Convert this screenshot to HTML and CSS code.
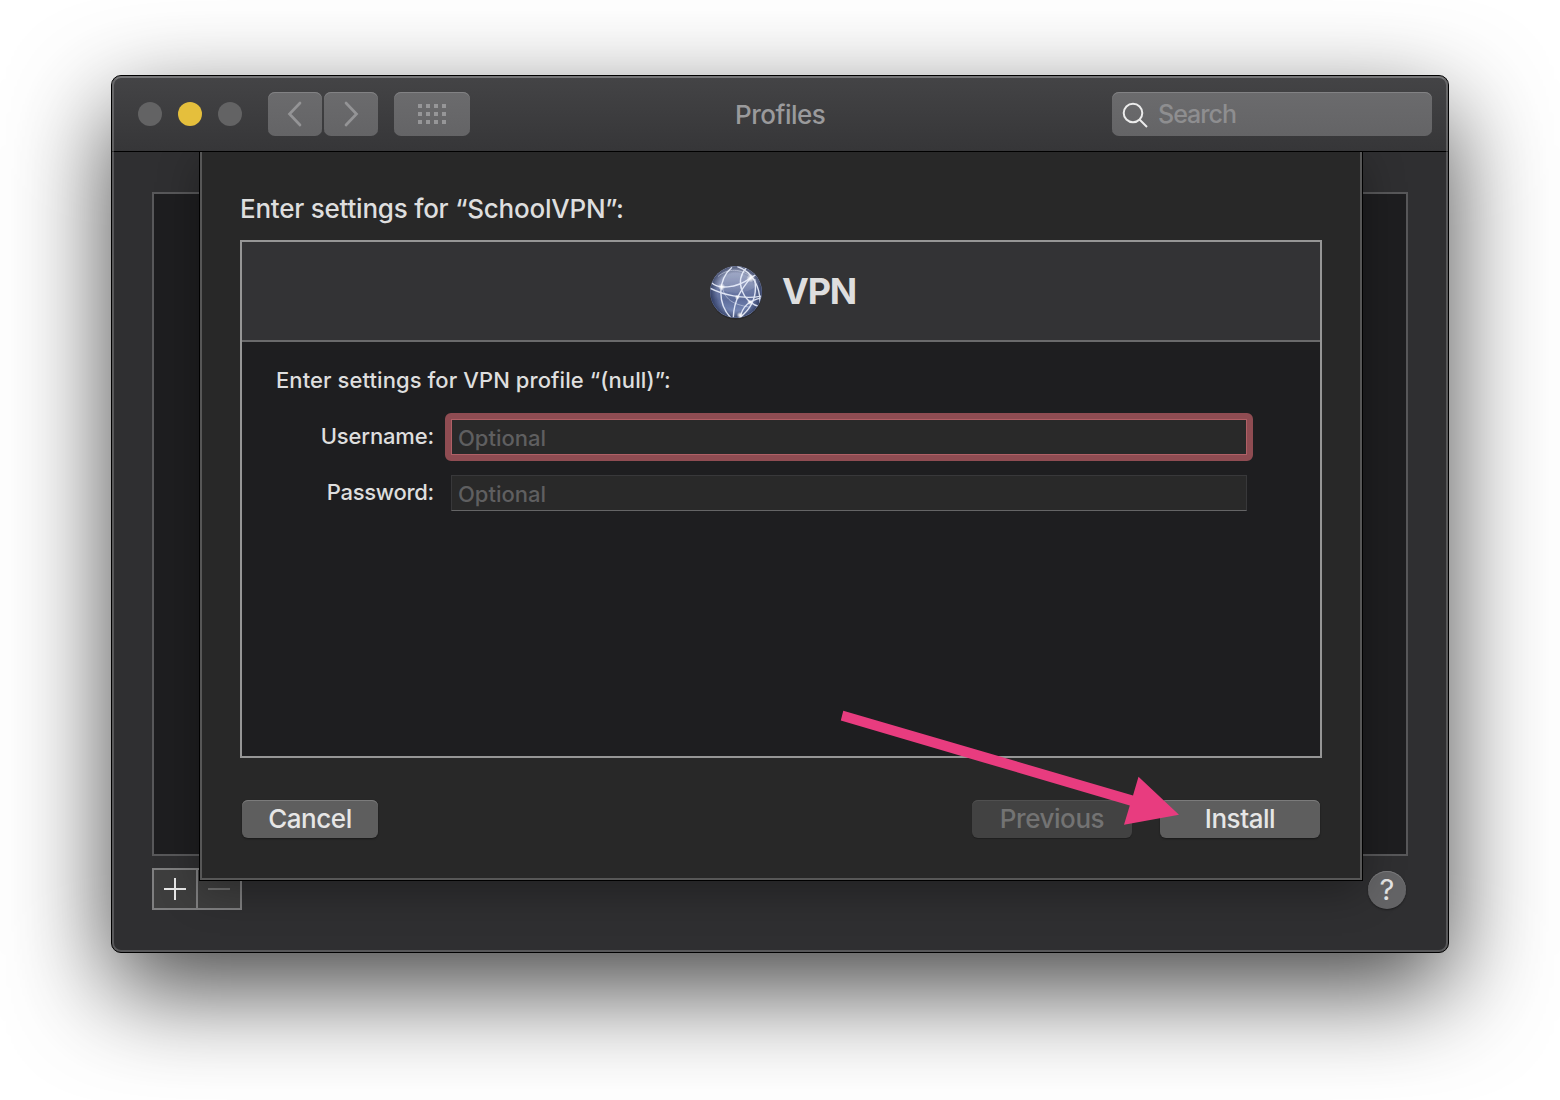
FILE: index.html
```
<!DOCTYPE html>
<html lang="en">
<head>
<meta charset="utf-8">
<title>Profiles</title>
<link rel="stylesheet" href="styles.css">
</head>
<body>
<main class="window">
  <header class="titlebar">
    <div class="lights"><i class="light"></i><i class="light light-min"></i><i class="light"></i></div>
    <div class="nav">
      <button class="tool" aria-label="Back"><svg width="54" height="44" viewBox="0 0 54 44"><path d="M32 11 21.500 22 32 33"/></svg></button>
      <button class="tool" aria-label="Forward"><svg width="54" height="44" viewBox="0 0 54 44"><path d="M22 11 32.500 22 22 33"/></svg></button>
    </div>
    <button class="tool tool-grid" aria-label="Show all"><span class="dots"><i></i><i></i><i></i><i></i><i></i><i></i><i></i><i></i><i></i><i></i><i></i><i></i></span></button>
    <h1 class="title"><span>Profiles</span></h1>
    <div class="search">
      <svg width="28" height="28" viewBox="0 0 28 28"><circle cx="12" cy="12" r="9.300"/><path d="M18.500 18.500 26 26"/></svg>
      <span>Search</span>
    </div>
  </header>
  <section class="body">
    <div class="list"></div>
    <footer class="footer">
      <div class="addremove">
        <button class="add" aria-label="Add"><svg width="22" height="22" viewBox="0 0 22 22"><path d="M0 11H22M11 0V22"/></svg></button>
        <button class="remove" aria-label="Remove"><svg width="22" height="22" viewBox="0 0 22 22"><path d="M0 11H22"/></svg></button>
      </div>
      <button class="help">?</button>
    </footer>
    <div class="sheet">
      <h2 class="sheet-title"><span>Enter settings for “SchoolVPN”:</span></h2>
      <div class="panel">
        <div class="panel-head">
          <svg class="globe" width="56" height="58" viewBox="0 0 56 58">
            <defs>
              <linearGradient id="sphere" x1="0" y1="0" x2="0" y2="1"><stop offset="0" stop-color="#7c88b0"/><stop offset=".35" stop-color="#7582ab"/><stop offset=".65" stop-color="#5f6e9c"/><stop offset="1" stop-color="#8496c4"/></linearGradient>
              <radialGradient id="rim" cx=".5" cy=".5" r=".5"><stop offset=".72" stop-color="#172142" stop-opacity="0"/><stop offset="1" stop-color="#172142" stop-opacity=".65"/></radialGradient>
              <linearGradient id="gloss" x1="0" y1="0" x2="0" y2="1"><stop offset="0" stop-color="#fff" stop-opacity=".38"/><stop offset="1" stop-color="#fff" stop-opacity=".06"/></linearGradient>
              <radialGradient id="node"><stop offset="0" stop-color="#fff"/><stop offset=".35" stop-color="#fff" stop-opacity=".7"/><stop offset="1" stop-color="#fff" stop-opacity="0"/></radialGradient>
              <clipPath id="disc"><circle cx="28" cy="28" r="25.700"/></clipPath>
            </defs>
            <ellipse cx="28" cy="30" rx="25.800" ry="25.800" fill="#000" opacity=".2"/>
            <circle cx="28" cy="28" r="26" fill="url(#sphere)"/>
            <g clip-path="url(#disc)">
              <ellipse cx="28" cy="14" rx="24" ry="15" fill="url(#gloss)"/>
              <circle cx="28" cy="28" r="26" fill="url(#rim)"/>
              <g transform="translate(-2 -1.500) scale(.3333)">
                <g class="lines">
                  <path d="M16 60C36 80 88 80 134 46L154 34"/>
                  <path d="M12 77C50 96 110 112 166 101"/>
                  <path d="M78 14C34 52 34 122 74 166"/>
                  <path d="M122 14C84 56 108 120 166 134"/>
                  <path d="M94 12C140 28 164 74 162 126"/>
                  <path d="M134 46C110 76 84 108 82 164"/>
                  <path d="M146 50C154 94 142 136 98 168"/>
                  <path d="M168 106C132 112 108 130 102 168"/>
                </g>
                <g class="lines lines-faint">
                  <path d="M47 72C60 112 76 124 130 134"/>
                  <path d="M36 42C66 16 106 18 136 44"/>
                </g>
                <g fill="url(#node)"><circle cx="47" cy="73" r="11"/><circle cx="134" cy="47" r="13"/><circle cx="94" cy="104" r="8"/><circle cx="132" cy="119" r="9"/><circle cx="102" cy="158" r="10"/></g>
              </g>
            </g>
          </svg>
          <h3 class="vpn"><span>VPN</span></h3>
        </div>
        <div class="panel-body">
          <p class="prompt"><span>Enter settings for VPN profile “(null)”:</span></p>
          <div class="row"><label class="label-user" for="user">Username:</label><div class="field field-focus" id="user"><span>Optional</span></div></div>
          <div class="row"><label class="label-pass" for="pass">Password:</label><div class="field" id="pass"><span>Optional</span></div></div>
        </div>
      </div>
      <div class="actions">
        <button class="btn btn-cancel"><span>Cancel</span></button>
        <button class="btn btn-prev"><span>Previous</span></button>
        <button class="btn btn-install"><span>Install</span></button>
      </div>
    </div>
  </section>
</main>
<svg class="arrow" width="340" height="120" viewBox="0 0 340 120"><path d="M3.300 10.700 293 95.500 298.500 76.800 339 114.800 284 124.800 289.800 105.500 0.800 20.500Z"/></svg>
</body>
</html>
```
FILE: styles.css
```
* { box-sizing: border-box; }
body {
  margin: 0;
  height: 1100px;
  overflow: hidden;
  position: relative;
  background: #fff;
  color: #dedede;
  font-family: Inter, "Liberation Sans", sans-serif;
  font-weight: 450;
}
button { padding: 0; border: 0; font: inherit; color: inherit; display: block; }
h1, h2, h3, p { margin: 0; font-weight: 450; white-space: nowrap; }
svg { display: block; }

.window {
  width: 1338px;
  height: 878px;
  margin: 75px 0 0 111px;
  display: flex;
  flex-direction: column;
  position: absolute;
  border: 1px solid #000;
  border-radius: 10px;
  background: #2f2f31;
  box-shadow: 0 36px 100px rgba(0, 0, 0, .73);
}
.window::after {
  content: "";
  position: absolute;
  inset: 0;
  border: 2px solid rgba(255, 255, 255, .2);
  border-top-color: rgba(255, 255, 255, .27);
  border-radius: 9px;
  pointer-events: none;
}
.titlebar {
  height: 76px;
  flex: none;
  display: flex;
  align-items: flex-start;
  padding: 16px 16px 0 26px;
  border-bottom: 1px solid #000;
  border-radius: 9px 9px 0 0;
  background: linear-gradient(#444446, #363638);
}
.lights { display: flex; gap: 16px; padding-top: 10px; margin-right: 26px; }
.light { width: 24px; height: 24px; border-radius: 50%; background: #636364; }
.light-min { background: #e5bf3c; }
.nav { display: flex; gap: 2px; margin-right: 16px; }
.tool, .search {
  height: 44px;
  border-radius: 7px;
  background: linear-gradient(#6b6b6d, #646466);
  box-shadow: inset 0 1px 0 #828284;
}
.tool { width: 54px; }
.tool path { fill: none; stroke: #949496; stroke-width: 2.7; stroke-linecap: round; stroke-linejoin: miter; }
.tool-grid { width: 76px; display: grid; place-items: center; }
.dots { display: grid; grid-template-columns: repeat(4, 4px); gap: 4px; }
.dots i { width: 4px; height: 4px; background: #969698; }
.title { flex: 1; margin-left: 265px; font-size: 26px; line-height: 46px; letter-spacing: -.5px; color: #9a9a9c; }
.search { width: 320px; display: flex; align-items: center; padding-left: 9px; gap: 9px; font-size: 25px; letter-spacing: -1px; color: #8e8e90; }
.search span { margin-top: -1px; }
.search svg { margin-top: 2px; fill: none; stroke: #ececec; stroke-width: 2; }

.body { flex: 1; position: relative; padding: 40px 40px 0; overflow: hidden; border-radius: 0 0 9px 9px; }
.list { height: 664px; border: 2px solid #58585a; background: #1e1e20; }
.footer { display: flex; justify-content: space-between; margin-top: 12px; }
.addremove { display: flex; width: 90px; height: 42px; border: 2px solid #7f7f80; background: #3e3e3e; }
.addremove button { flex: 1; display: grid; place-items: center; background: none; }
.addremove .add { flex: 0 0 44px; padding-right: 1px; border-right: 2px solid #7f7f80; }
.addremove path { stroke: #e8e8e8; stroke-width: 2; }
.addremove .remove path { stroke: #707070; }
.help { width: 38px; height: 38px; margin: 3px 2px 0 0; border-radius: 50%; background: #646466; box-shadow: inset 0 1px #7c7c7e, 0 1px 2px rgba(0,0,0,.4); font-size: 29px; font-weight: 400; line-height: 38px; text-align: center; color: #e6e6e6; }

.sheet {
  position: absolute;
  left: 88px;
  top: 0;
  width: 1162px;
  height: 728px;
  padding: 38px 38px 0;
  border: 2px solid #575757;
  border-top: 0;
  background: #282828;
  box-shadow: 0 0 0 1px #000, 0 10px 40px rgba(0, 0, 0, .32);
}
.sheet-title { height: 50px; font-size: 26px; line-height: 38px; letter-spacing: -.23px; }
.panel { width: 1082px; height: 518px; border: 2px solid #969696; background: #1e1e20; }
.panel-head { height: 100px; display: flex; align-items: center; padding-left: 466px; gap: 18px; border-bottom: 2px solid #6a6a6b; background: #333335; }
.globe { margin-top: 4px; }
.lines { fill: none; stroke: #eef3ff; stroke-width: 4.2; opacity: .88; }
.lines-faint { stroke-width: 3; opacity: .45; }
.vpn { font-size: 36px; font-weight: 700; line-height: 44px; letter-spacing: -1.2px; }
.panel-body { padding: 22px 73px 0 34px; }
.prompt { height: 50px; font-size: 22px; line-height: 32px; letter-spacing: .08px; }
.row { display: flex; justify-content: space-between; height: 56px; }
.row label { width: 158px; text-align: right; font-size: 22px; line-height: 36px; white-space: nowrap; padding-top: 4px; }
.label-user { letter-spacing: -.15px; }
.label-pass { letter-spacing: -.28px; }
.field {
  width: 796px;
  height: 36px;
  margin-top: 5px;
  padding-left: 6px;
  border: 1px solid #38383a;
  border-bottom-color: #656566;
  background: #292929;
  font-size: 22px;
  line-height: 36px;
  color: #5f5f60;
  position: relative;
}
.field-focus { border-color: #b06066; }
/* The ring keeps a square inner edge and rounded outer corners. */
.field-focus::before {
  content: "";
  position: absolute;
  inset: -7px;
  border: 6px solid #8f4c52;
  border-radius: 6px;
}
.actions { display: flex; padding: 42px 2px 0; }
.btn {
  width: 160px;
  height: 38px;
  border-radius: 6px;
  background: #5e5e5e;
  box-shadow: inset 0 1px #7b7b7b, 0 1px 2px rgba(0, 0, 0, .4);
  font-size: 26px;
  line-height: 38px;
  letter-spacing: -.45px;
  color: #e6e6e6;
}
.btn-cancel { width: 136px; margin-right: auto; }
.btn-prev { margin-right: 28px; background: #424242; color: #737373; box-shadow: inset 0 1px #505050, 0 1px 1px rgba(0, 0, 0, .25); }
.arrow { position: absolute; left: 840px; top: 700px; overflow: visible; fill: #e83c7f; }
```
